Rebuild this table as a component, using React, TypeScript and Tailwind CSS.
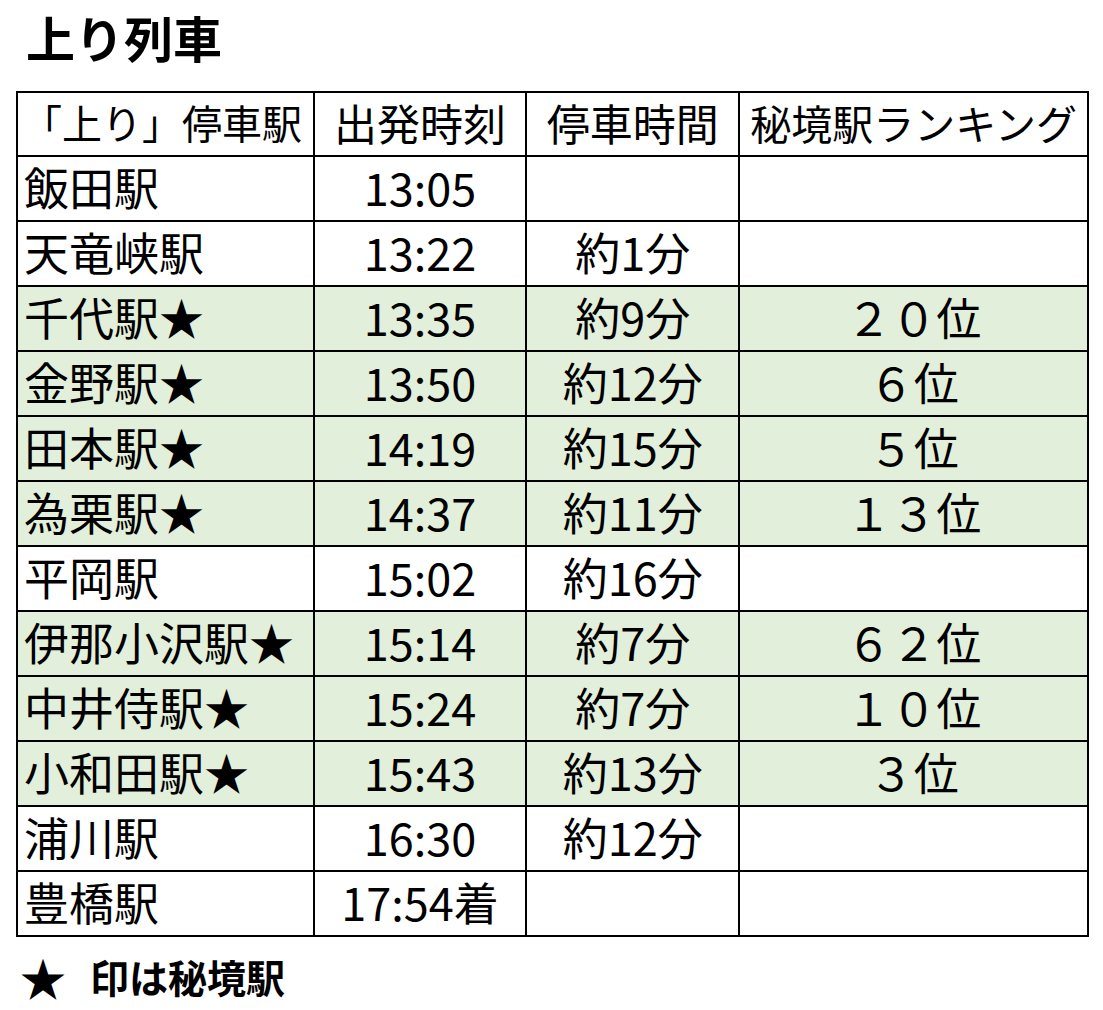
const rows: { name: string; time: string; stop: string; rank: string; hikyo: boolean }[] = [
  { name: '飯田駅', time: '13:05', stop: '', rank: '', hikyo: false },
  { name: '天竜峡駅', time: '13:22', stop: '約1分', rank: '', hikyo: false },
  { name: '千代駅★', time: '13:35', stop: '約9分', rank: '２０位', hikyo: true },
  { name: '金野駅★', time: '13:50', stop: '約12分', rank: '６位', hikyo: true },
  { name: '田本駅★', time: '14:19', stop: '約15分', rank: '５位', hikyo: true },
  { name: '為栗駅★', time: '14:37', stop: '約11分', rank: '１３位', hikyo: true },
  { name: '平岡駅', time: '15:02', stop: '約16分', rank: '', hikyo: false },
  { name: '伊那小沢駅★', time: '15:14', stop: '約7分', rank: '６２位', hikyo: true },
  { name: '中井侍駅★', time: '15:24', stop: '約7分', rank: '１０位', hikyo: true },
  { name: '小和田駅★', time: '15:43', stop: '約13分', rank: '３位', hikyo: true },
  { name: '浦川駅', time: '16:30', stop: '約12分', rank: '', hikyo: false },
  { name: '豊橋駅', time: '17:54着', stop: '', rank: '', hikyo: false },
];

const font = { fontFamily: '"Noto Sans CJK JP", "Noto Sans", sans-serif' };

export default function App() {
  return (
    <div className="w-[1103px] h-[1010px] bg-white text-black" style={font}>
      <h1 className="pl-[26px] pt-[8px] h-[91px] text-[49px] font-bold leading-[58px]">上り列車</h1>
      <table className="ml-[16px] w-[1073px] border-collapse border-2 border-black text-[45px] leading-none">
        <colgroup>
          <col className="w-[297px]" />
          <col className="w-[213px]" />
          <col className="w-[214px]" />
          <col className="w-[349px]" />
        </colgroup>
        <thead>
          <tr className="h-[64px]">
            <th className="border-2 border-black font-normal text-left pl-[4px] pb-[4px] whitespace-nowrap text-[40px]">「上り」停車駅</th>
            <th className="border-2 border-black font-normal pb-[4px] whitespace-nowrap text-[43px]">出発時刻</th>
            <th className="border-2 border-black font-normal pb-[4px] whitespace-nowrap text-[43px]">停車時間</th>
            <th className="border-2 border-black font-normal pb-[4px] whitespace-nowrap text-[41px]">秘境駅ランキング</th>
          </tr>
        </thead>
        <tbody>
          {rows.map((r) => (
            <tr key={r.name} className={`h-[65px] ${r.hikyo ? 'bg-[#e2efda]' : 'bg-white'}`}>
              <td className="border-2 border-black pl-[6px] pb-[4px] whitespace-nowrap">{r.name}</td>
              <td className="border-2 border-black pb-[4px] text-center whitespace-nowrap">{r.time}</td>
              <td className="border-2 border-black pb-[4px] text-center whitespace-nowrap">{r.stop}</td>
              <td className="border-2 border-black pb-[4px] text-center whitespace-nowrap">{r.rank}</td>
            </tr>
          ))}
        </tbody>
      </table>
      <div className="flex items-center pl-[20px] pt-[16px] font-bold leading-none">
        <span className="w-[70px] text-[46px]">★</span>
        <span className="text-[39px]">印は秘境駅</span>
      </div>
    </div>
  );
}
